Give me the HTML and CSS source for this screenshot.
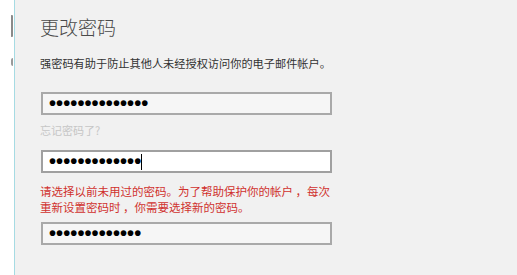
FILE: index.html
```html
<!DOCTYPE html>
<html lang="zh-CN">
<head>
<meta charset="utf-8">
<title>更改密码</title>
<link rel="stylesheet" href="styles.css">
</head>
<body>
<div class="page">
  <div class="gutter">
    <span class="bracket"></span>
    <span class="mark"></span>
  </div>
  <div class="panel">
    <h1 class="title">更改密码</h1>
    <p class="intro">强密码有助于防止其他人未经授权访问你的电子邮件帐户。</p>
    <div class="field"><span class="dots">••••••••••••••</span></div>
    <p class="forgot">忘记密码了?</p>
    <div class="field active"><span class="dots">•••••••••••••</span><span class="caret"></span></div>
    <p class="error">请选择以前未用过的密码。为了帮助保护你的帐户 ，每次重新设置密码时 ，你需要选择新的密码。</p>
    <div class="field"><span class="dots">•••••••••••••</span></div>
  </div>
  <div class="outside"></div>
</div>
</body>
</html>
```

FILE: styles.css
```css
html, body {
  margin: 0;
  padding: 0;
  background: #ffffff;
}

body {
  font-family: "Noto Sans CJK SC", "Noto Sans", sans-serif;
}

.page {
  display: flex;
  width: 517px;
  height: 275px;
  overflow: hidden;
}

.gutter {
  width: 14px;
  flex: none;
  display: flex;
  flex-direction: column;
  align-items: flex-end;
  padding-right: 1px;
  box-sizing: border-box;
}

.bracket {
  display: block;
  width: 2px;
  height: 22px;
  margin-top: 15px;
  border-left: 2px solid #8a8a8a;
  border-top: 1px solid #b0b0b0;
  border-bottom: 1px solid #b0b0b0;
  box-sizing: border-box;
}

.mark {
  display: block;
  width: 2px;
  height: 8px;
  margin-top: 21px;
  border-radius: 2px 0 0 2px;
  background: #9a9a9a;
}

.panel {
  width: 484px;
  flex: none;
  height: 275px;
  background: #f1f1f1;
  border-left: 1px solid #a6dbe3;
  padding: 14px 0 0 25px;
  box-sizing: content-box;
}

.title {
  margin: 0;
  font-size: 19px;
  line-height: 26px;
  font-weight: 300;
  color: #4a4a4a;
}

.intro {
  margin: 15px 0 0;
  font-size: 11.2px;
  line-height: 16px;
  color: #333333;
}

.field {
  margin: 21px 0 0 1px;
  width: 291px;
  height: 23px;
  box-sizing: border-box;
  border: 2px solid #a9a9a9;
  background: #f6f6f6;
  display: flex;
  align-items: center;
  padding-left: 6px;
}

.field.active {
  margin-top: 12px;
  background: #ffffff;
  border-color: #a0a0a0;
}

.dots {
  font-family: "Liberation Sans", Arial, sans-serif;
  font-size: 20px;
  font-weight: bold;
  line-height: 19px;
  color: #000000;
  letter-spacing: 0.1px;
}

.caret {
  display: block;
  width: 1px;
  height: 16px;
  background: #000000;
}

.forgot {
  margin: 7px 0 0;
  font-size: 11px;
  line-height: 16px;
  color: #c6c6c6;
}

.error {
  margin: 10px 0 0;
  width: 296px;
  font-size: 11.5px;
  line-height: 16px;
  color: #d0312e;
}

.error + .field {
  margin-top: 7px;
}

.outside {
  flex: 1;
  background: #ffffff;
}
```
